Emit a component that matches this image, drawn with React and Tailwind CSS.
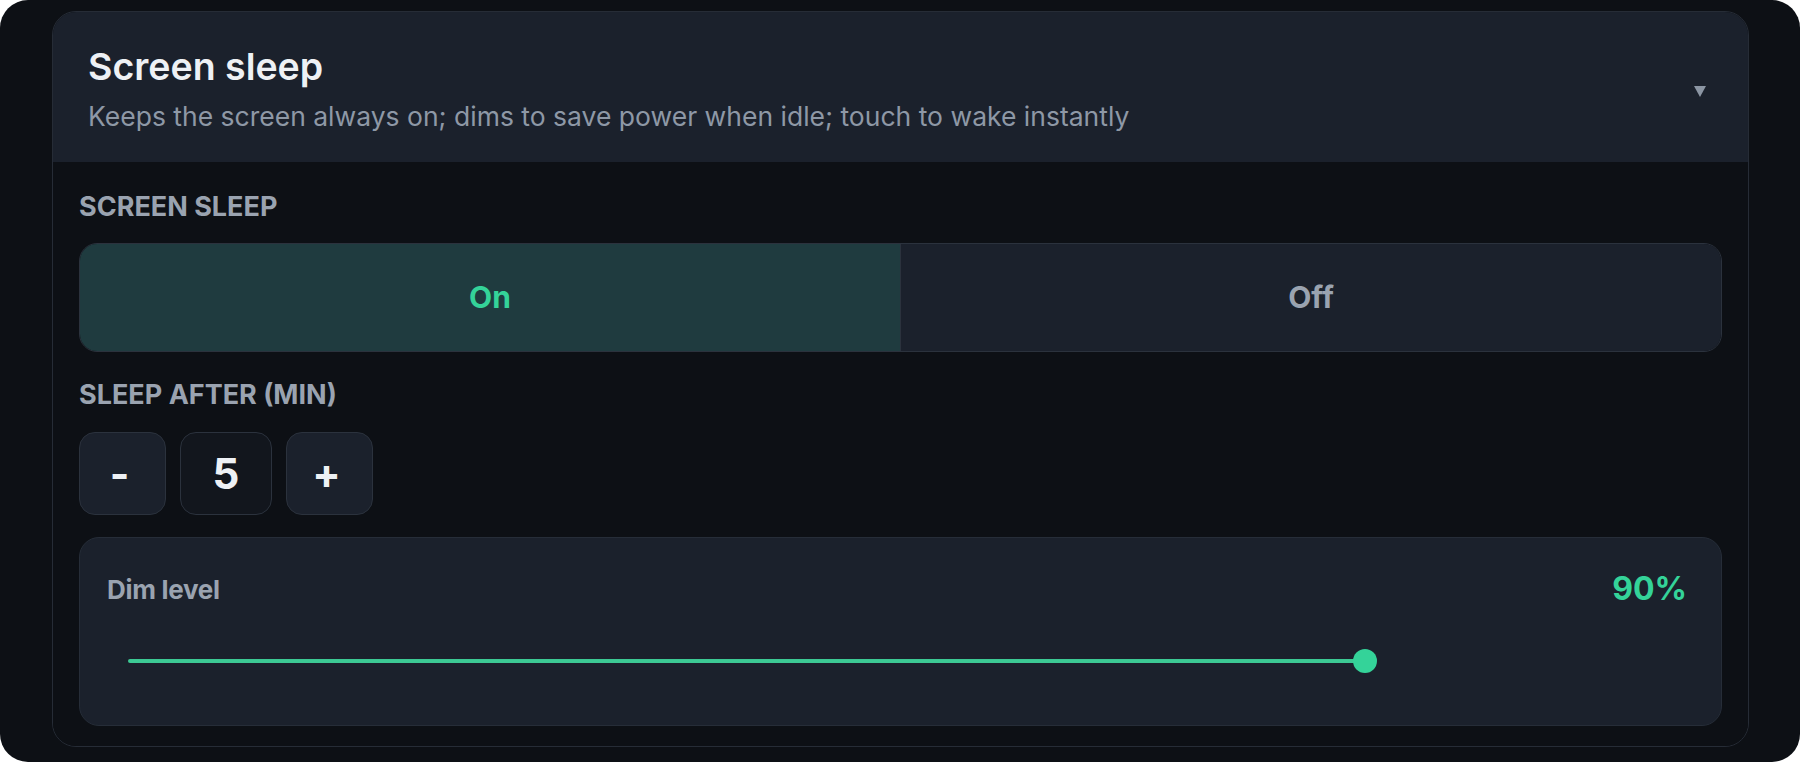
import React from "react";

export default function App() {
  return (
    <div className="w-[1800px] h-[762px] bg-white" style={{ fontFamily: "Inter, 'Noto Sans', sans-serif" }}>
      <div className="w-full h-full rounded-[28px] bg-[#0d1015] pt-[11px] pl-[52px] pr-[51px] pb-[15px]">
        <div className="h-full rounded-[24px] border border-[#262c36] overflow-hidden flex flex-col">
          {/* Header */}
          <div className="bg-[#1b212c] pl-[35px] pr-[42px] pt-[33px] pb-[31px] flex items-center">
            <div className="flex-1">
              <div className="text-[37.5px] leading-[44px] font-semibold text-[#eef1f5]">Screen sleep</div>
              <div className="mt-[12px] text-[26.5px] leading-[30px] text-[#8e98a6]">
                Keeps the screen always on; dims to save power when idle; touch to wake instantly
              </div>
            </div>
            <svg width="12" height="11" viewBox="0 0 12 11" className="mt-[6px]">
              <path d="M0 0 L12 0 L6 11 Z" fill="#8b95a3" />
            </svg>
          </div>

          {/* Body */}
          <div className="flex-1 bg-[#0d1015] px-[26px] pt-[30px]">
            <div className="text-[27px] leading-[30px] font-bold text-[#9aa3b0]">SCREEN SLEEP</div>
            <div className="mt-[21px] h-[109px] rounded-[18px] border border-[#2b323d] overflow-hidden flex">
              <div className="flex-1 bg-[#1f3b3f] flex items-center justify-center text-[30px] font-bold text-[#34d399]">On</div>
              <div className="w-px bg-[#2b323d]"></div>
              <div className="flex-1 bg-[#1b212c] flex items-center justify-center text-[30px] font-bold text-[#9aa3b0]">Off</div>
            </div>

            <div className="mt-[28px] text-[27px] leading-[30px] font-bold text-[#9aa3b0]">SLEEP AFTER (MIN)</div>
            <div className="mt-[22px] flex gap-[14px]">
              <div className="w-[87px] h-[83px] rounded-[16px] border border-[#2b323d] bg-[#1b212c] flex items-center justify-center text-[42px] font-bold text-[#eef1f5] pr-[6px]">-</div>
              <div className="w-[92px] h-[83px] rounded-[16px] border border-[#2b323d] bg-[#12161d] flex items-center justify-center text-[42px] font-bold text-[#eef1f5]">5</div>
              <div className="w-[87px] h-[83px] rounded-[16px] border border-[#2b323d] bg-[#1b212c] flex items-center justify-center text-[42px] font-bold text-[#eef1f5] pr-[6px]">+</div>
            </div>

            <div className="mt-[22px] h-[189px] rounded-[20px] border border-[#262d38] bg-[#1b212c] pl-[27px] pr-[34px] pt-[33px]">
              <div className="flex items-center justify-between h-[36px]">
                <div className="text-[26px] font-bold text-[#9aa3b0] tracking-[-0.3px]">Dim level</div>
                <div className="text-[32px] font-bold text-[#34d399]">90%</div>
              </div>
              <div className="mt-[42px] ml-[21px] w-[1374px] h-[24px] relative flex items-center">
                <div className="h-[4px] w-[90%] bg-[#3cc994] rounded-full"></div>
                <div className="absolute left-[90%] top-0 -translate-x-1/2 w-[24px] h-[24px] rounded-full bg-[#34d399]"></div>
              </div>
            </div>
          </div>
        </div>
      </div>
    </div>
  );
}
